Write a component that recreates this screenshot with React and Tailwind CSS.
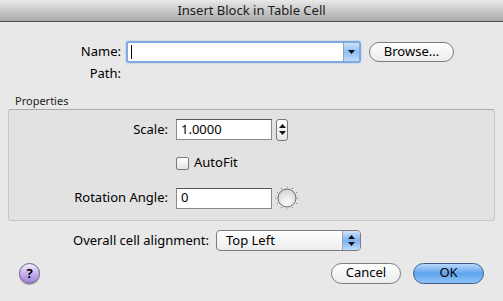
import React from 'react';

const font = { fontFamily: '"Lucida Grande", "Noto Sans", "DejaVu Sans", sans-serif' };

function Caret({ up }) {
  return (
    <svg width="7" height="4" viewBox="0 0 7 4">
      <path d={up ? 'M0 4 L3.5 0 L7 4 Z' : 'M0 0 L7 0 L3.5 4 Z'} fill="#111" />
    </svg>
  );
}

function Dial() {
  const ticks = Array.from({ length: 12 }, (_, i) => i * 30);
  return (
    <svg width="24" height="24" viewBox="0 0 24 24">
      {ticks.map((a) => {
        const r = (a * Math.PI) / 180;
        return <circle key={a} cx={12 + Math.sin(r) * 11} cy={12 - Math.cos(r) * 11} r="0.6" fill="#777" />;
      })}
      <defs>
        <radialGradient id="dg" cx="0.5" cy="0.75" r="0.7">
          <stop offset="0" stopColor="#ffffff" />
          <stop offset="1" stopColor="#d4d4d4" />
        </radialGradient>
      </defs>
      <circle cx="12" cy="12" r="9" fill="url(#dg)" stroke="#6b6b6b" strokeWidth="1" />
    </svg>
  );
}

export default function App() {
  return (
    <div className="w-[503px] h-[301px] bg-[#e8e8e8] text-[13px] text-black overflow-hidden" style={font}>
      <div className="h-[22px] bg-gradient-to-b from-[#e9e9e9] to-[#a9a9a9] border-b border-[#515151] flex items-center justify-center text-[13px] text-[#1c1c1c]">
        Insert Block in Table Cell
      </div>

      <div className="pt-[19px]">
        <div className="flex items-center h-[22px]">
          <div className="w-[121px] text-right">Name:</div>
          <div className="ml-[5px] w-[235px] h-[22px] rounded-[3px] border-2 border-[#7fa9df] shadow-[0_0_2px_#8db6ea] bg-white flex">
            <div className="flex-1 flex items-center pl-[3px]">
              <div className="w-px h-[14px] bg-black" />
            </div>
            <div className="w-[16px] border-l border-[#8fa3bd] bg-gradient-to-b from-[#cfe3fb] via-[#8ebdf2] to-[#bfdcfb] flex items-center justify-center">
              <Caret />
            </div>
          </div>
          <div className="ml-[8px] w-[85px] h-[20px] rounded-full border border-[#7c7c7c] bg-gradient-to-b from-white to-[#ececec] flex items-center justify-center">
            Browse...
          </div>
        </div>

        <div className="flex items-center h-[20px] mt-[1px]">
          <div className="w-[121px] text-right">Path:</div>
        </div>

        <div className="mt-[10px] h-[14px] pl-[15px] text-[11px] leading-[14px] text-[#222]">Properties</div>

        <div className="mt-[1px] mx-[8px] h-[112px] rounded-[3px] border border-[#c6c6c6] border-t-[#aaaaaa] bg-[#e2e2e2] pt-[9px]">
          <div className="flex items-center h-[21px]">
            <div className="w-[159px] text-right">Scale:</div>
            <div className="ml-[8px] w-[96px] h-[21px] border border-[#8a8a8a] border-t-[#555] bg-white flex items-center pl-[4px]">1.0000</div>
            <div className="ml-[4px] w-[12px] h-[22px] rounded-[3px] border border-[#777] bg-gradient-to-b from-white to-[#e6e6e6] flex flex-col items-center justify-center gap-[3px]">
              <Caret up />
              <Caret />
            </div>
          </div>

          <div className="flex items-center h-[14px] mt-[16px]">
            <div className="ml-[167px] w-[13px] h-[13px] rounded-[2px] border border-[#7a7a7a] bg-gradient-to-b from-white to-[#e4e4e4]" />
            <div className="ml-[5px]">AutoFit</div>
          </div>

          <div className="flex items-center h-[22px] mt-[17px]">
            <div className="w-[159px] text-right">Rotation Angle:</div>
            <div className="ml-[8px] w-[96px] h-[21px] border border-[#8a8a8a] border-t-[#555] bg-white flex items-center pl-[4px]">0</div>
            <div className="ml-[3px]">
              <Dial />
            </div>
          </div>
        </div>

        <div className="flex items-center h-[21px] mt-[9px]">
          <div className="w-[209px] text-right">Overall cell alignment:</div>
          <div className="ml-[7px] w-[145px] h-[21px] rounded-[4px] border border-[#7c7c7c] bg-gradient-to-b from-white to-[#ececec] flex overflow-hidden">
            <div className="flex-1 flex items-center pl-[9px]">Top Left</div>
            <div className="w-[18px] bg-gradient-to-b from-[#cfe3fb] via-[#7eb2ef] to-[#bfdcfb] border-l border-[#8fa3bd] flex flex-col items-center justify-center gap-[3px]">
              <Caret up />
              <Caret />
            </div>
          </div>
        </div>

        <div className="flex items-center h-[22px] mt-[11px]">
          <div className="ml-[19px] w-[21px] h-[21px] rounded-full border border-[#6d5a95] bg-gradient-to-b from-[#f3ecff] via-[#c7b2ee] to-[#9b84d0] flex items-center justify-center text-[13px] font-bold leading-none shadow-[0_1px_1px_rgba(0,0,0,0.3)]">
            ?
          </div>
          <div className="ml-[291px] w-[70px] h-[21px] rounded-full border border-[#7c7c7c] bg-gradient-to-b from-white to-[#ececec] flex items-center justify-center">
            Cancel
          </div>
          <div className="ml-[12px] w-[71px] h-[21px] rounded-full border border-[#3c5d8c] bg-gradient-to-b from-[#b7d8fb] via-[#5ea3ec] to-[#8fc4f7] flex items-center justify-center">
            OK
          </div>
        </div>
      </div>
    </div>
  );
}
